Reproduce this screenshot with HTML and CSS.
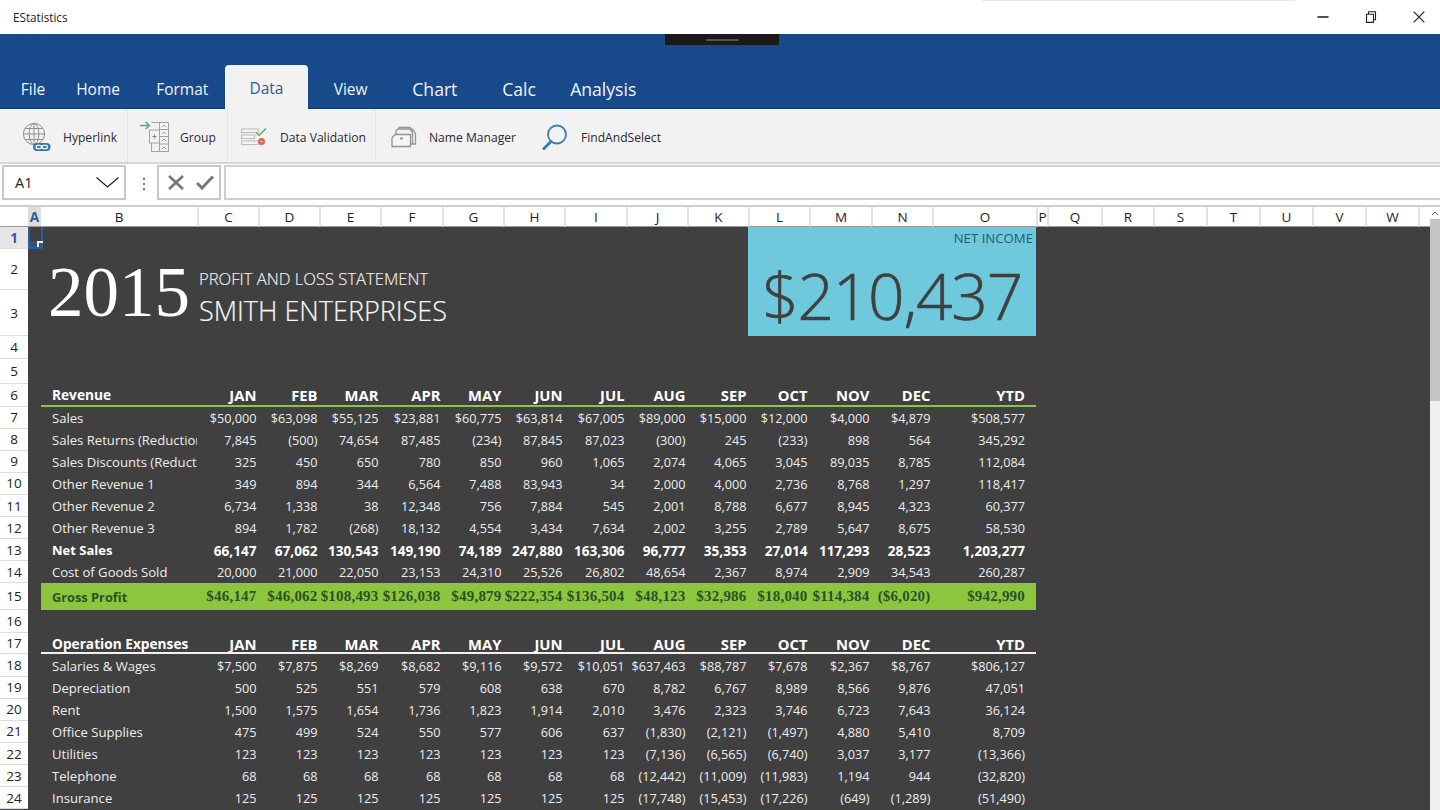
FILE: index.html
```html
<!DOCTYPE html>
<html lang="en">
<head>
<meta charset="utf-8">
<title>EStatistics</title>
<link rel="stylesheet" href="styles.css">
</head>
<body>
<div class="app">
  <header class="titlebar">
    <span class="app-name">EStatistics</span>
    <div class="win">
      <svg width="12" height="12" viewBox="0 0 12 12"><path d="M0.5 6h11" stroke="#222" stroke-width="1.6"/></svg>
      <svg width="12" height="12" viewBox="0 0 12 12" fill="none" stroke="#222" stroke-width="1.1"><path d="M1.5 3.2h7v8.2h-7z"/><path d="M3.5 3V.7h7v8h-2"/></svg>
      <svg width="12" height="12" viewBox="0 0 12 12"><path d="M.7.7l10.6 10.6M11.3.7L.7 11.3" stroke="#222" stroke-width="1.2"/></svg>
    </div>
    <span class="edge"></span>
  </header>
  <nav class="ribbon">
    <span class="notch"><i></i></span>
    <div class="tabs">
      <a class="tab tab-file">File</a>
      <a class="tab">Home</a>
      <a class="tab">Format</a>
      <a class="tab tab-on">Data</a>
      <a class="tab">View</a>
      <a class="tab tab-lg">Chart</a>
      <a class="tab tab-lg">Calc</a>
      <a class="tab tab-lg">Analysis</a>
    </div>
  </nav>
  <div class="toolbar">
    <div class="tool t1">
      <svg width="30" height="30" viewBox="0 0 30 30" fill="none"><g stroke="#8f8f8f" stroke-width="1"><circle cx="12" cy="12" r="10.6"/><ellipse cx="12" cy="12" rx="4.8" ry="10.6"/><path d="M12 1.400v21.200M1.400 12h21.200M3 6.500h18M3 17.500h18"/></g><rect x="11" y="21" width="17.500" height="8" rx="4" fill="#3a76a8"/><g stroke="#fff" stroke-width="1.200" fill="none"><rect x="14" y="23.400" width="5.500" height="3.200" rx="1.600"/><rect x="20" y="23.400" width="5.500" height="3.200" rx="1.600"/></g></svg>
      <span>Hyperlink</span>
    </div>
    <div class="tool t2">
      <svg width="30" height="32" viewBox="0 0 30 32" fill="none"><path d="M0 4.500h8M5.500 1l4 3.500-4 3.500" stroke="#5aa396" stroke-width="1.500"/><g stroke="#a2a2a2"><path d="M11.500 1.500h17v29h-17V22M19.500 1.500v29M19.500 8.500h9M19.500 15.500h9M19.500 23h9"/><rect x="9.500" y="9" width="10" height="13"/><path d="M12.500 15.500h4M14.500 13.500v4" stroke="#808080"/><path d="M22 6l2-2 2 2M22 13l2-2 2 2M22 20l2-2 2 2M22 28l2-2 2 2"/></g></svg>
      <span>Group</span>
    </div>
    <div class="tool t3">
      <svg width="26" height="18" viewBox="0 0 26 18" fill="none"><g stroke="#bdbdbd" stroke-width="1.100" fill="#f6f6f6"><rect x=".6" y="1" width="17" height="3.500"/><rect x=".6" y="7" width="13" height="3.500"/><rect x=".6" y="13" width="17" height="3.500"/></g><path d="M15 4.500l3 3 7-7" stroke="#6aa878" stroke-width="1.500"/><circle cx="20.500" cy="13.500" r="3.500" fill="#e2625a"/><path d="M19 13.500h3" stroke="#fff"/></svg>
      <span>Data Validation</span>
    </div>
    <div class="tool t4">
      <svg width="26" height="22" viewBox="0 0 26 22" fill="none" stroke="#949494" stroke-width="1.300"><path d="M1 20.500V12l3-3.500h15.500V20.500z" fill="#f6f6f6"/><path d="M5 8V5l2-2h12l2.500 3v12h-2"/><path d="M8 3V1.500h11l4 3.500 1.500 3v10h-3"/><path d="M9 12.500h3" stroke-width="1.800"/></svg>
      <span>Name Manager</span>
    </div>
    <div class="tool t5">
      <svg width="26" height="26" viewBox="0 0 26 26" fill="none" stroke="#3b7cb3"><circle cx="15" cy="10.500" r="9" stroke-width="1.800"/><path d="M9 17.500L2 24.500" stroke-width="3" stroke-linecap="round"/></svg>
      <span>FindAndSelect</span>
    </div>
  </div>
  <div class="formula">
    <div class="namebox">
      <span>A1</span>
      <svg width="23" height="11" viewBox="0 0 23 11" fill="none"><path d="M.5.5L11.500 10 22.500.5" stroke="#222" stroke-width="1.300"/></svg>
    </div>
    <svg class="dots" width="4" height="12" viewBox="0 0 4 12"><g fill="#777"><rect x="1" y="0" width="2" height="2"/><rect x="1" y="5" width="2" height="2"/><rect x="1" y="10" width="2" height="2"/></g></svg>
    <div class="actions">
      <svg width="16" height="15" viewBox="0 0 16 15"><path d="M1 1l14 13M15 1L1 14" stroke="#777" stroke-width="2.600"/></svg>
      <svg width="18" height="15" viewBox="0 0 18 15"><path d="M1 8l5 5L17 1.500" fill="none" stroke="#777" stroke-width="3"/></svg>
    </div>
    <div class="input"></div>
  </div>
  <div class="sheet-wrap">
    <div class="sheet">
      <div class="colhead">
        <span></span><span class="on">A</span><span>B</span><span>C</span><span>D</span><span>E</span><span>F</span><span>G</span><span>H</span><span>I</span><span>J</span><span>K</span><span>L</span><span>M</span><span>N</span><span>O</span><span>P</span><span>Q</span><span>R</span><span>S</span><span>T</span><span>U</span><span>V</span><span>W</span><span></span>
      </div>
      <span class="rn rn-on">1</span>
      <span class="sel"><i></i></span>
      <span class="rn">2</span>
      <span class="year">2015</span>
      <span class="sub">PROFIT AND LOSS STATEMENT</span>
      <span class="rn">3</span>
      <span class="co">SMITH ENTERPRISES</span>
      <div class="kpi"><span class="kpi-l">NET INCOME</span><span class="kpi-v">$210,437</span></div>
      <span class="rn">4</span>
      <span class="rn">5</span>
      <div class="row hd"><span class="rn">6</span><span class="lb">Revenue</span><span>JAN</span><span>FEB</span><span>MAR</span><span>APR</span><span>MAY</span><span>JUN</span><span>JUL</span><span>AUG</span><span>SEP</span><span>OCT</span><span>NOV</span><span>DEC</span><span>YTD</span></div>
      <div class="row"><span class="rn">7</span><span class="lb">Sales</span><span>$50,000</span><span>$63,098</span><span>$55,125</span><span>$23,881</span><span>$60,775</span><span>$63,814</span><span>$67,005</span><span>$89,000</span><span>$15,000</span><span>$12,000</span><span>$4,000</span><span>$4,879</span><span>$508,577</span></div>
      <div class="row"><span class="rn">8</span><span class="lb">Sales Returns (Reduction)</span><span>7,845</span><span>(500)</span><span>74,654</span><span>87,485</span><span>(234)</span><span>87,845</span><span>87,023</span><span>(300)</span><span>245</span><span>(233)</span><span>898</span><span>564</span><span>345,292</span></div>
      <div class="row"><span class="rn">9</span><span class="lb">Sales Discounts (Reduction)</span><span>325</span><span>450</span><span>650</span><span>780</span><span>850</span><span>960</span><span>1,065</span><span>2,074</span><span>4,065</span><span>3,045</span><span>89,035</span><span>8,785</span><span>112,084</span></div>
      <div class="row"><span class="rn">10</span><span class="lb">Other Revenue 1</span><span>349</span><span>894</span><span>344</span><span>6,564</span><span>7,488</span><span>83,943</span><span>34</span><span>2,000</span><span>4,000</span><span>2,736</span><span>8,768</span><span>1,297</span><span>118,417</span></div>
      <div class="row"><span class="rn">11</span><span class="lb">Other Revenue 2</span><span>6,734</span><span>1,338</span><span>38</span><span>12,348</span><span>756</span><span>7,884</span><span>545</span><span>2,001</span><span>8,788</span><span>6,677</span><span>8,945</span><span>4,323</span><span>60,377</span></div>
      <div class="row"><span class="rn">12</span><span class="lb">Other Revenue 3</span><span>894</span><span>1,782</span><span>(268)</span><span>18,132</span><span>4,554</span><span>3,434</span><span>7,634</span><span>2,002</span><span>3,255</span><span>2,789</span><span>5,647</span><span>8,675</span><span>58,530</span></div>
      <div class="row net"><span class="rn">13</span><span class="lb">Net Sales</span><span>66,147</span><span>67,062</span><span>130,543</span><span>149,190</span><span>74,189</span><span>247,880</span><span>163,306</span><span>96,777</span><span>35,353</span><span>27,014</span><span>117,293</span><span>28,523</span><span>1,203,277</span></div>
      <div class="row"><span class="rn">14</span><span class="lb">Cost of Goods Sold</span><span>20,000</span><span>21,000</span><span>22,050</span><span>23,153</span><span>24,310</span><span>25,526</span><span>26,802</span><span>48,654</span><span>2,367</span><span>8,974</span><span>2,909</span><span>34,543</span><span>260,287</span></div>
      <div class="row gp"><span class="rn">15</span><span class="lb">Gross Profit</span><span>$46,147</span><span>$46,062</span><span>$108,493</span><span>$126,038</span><span>$49,879</span><span>$222,354</span><span>$136,504</span><span>$48,123</span><span>$32,986</span><span>$18,040</span><span>$114,384</span><span>($6,020)</span><span>$942,990</span></div>
      <span class="rn">16</span>
      <div class="row hd hd-w"><span class="rn">17</span><span class="lb">Operation Expenses</span><span>JAN</span><span>FEB</span><span>MAR</span><span>APR</span><span>MAY</span><span>JUN</span><span>JUL</span><span>AUG</span><span>SEP</span><span>OCT</span><span>NOV</span><span>DEC</span><span>YTD</span></div>
      <div class="row"><span class="rn">18</span><span class="lb">Salaries &amp; Wages</span><span>$7,500</span><span>$7,875</span><span>$8,269</span><span>$8,682</span><span>$9,116</span><span>$9,572</span><span>$10,051</span><span>$637,463</span><span>$88,787</span><span>$7,678</span><span>$2,367</span><span>$8,767</span><span>$806,127</span></div>
      <div class="row"><span class="rn">19</span><span class="lb">Depreciation</span><span>500</span><span>525</span><span>551</span><span>579</span><span>608</span><span>638</span><span>670</span><span>8,782</span><span>6,767</span><span>8,989</span><span>8,566</span><span>9,876</span><span>47,051</span></div>
      <div class="row"><span class="rn">20</span><span class="lb">Rent</span><span>1,500</span><span>1,575</span><span>1,654</span><span>1,736</span><span>1,823</span><span>1,914</span><span>2,010</span><span>3,476</span><span>2,323</span><span>3,746</span><span>6,723</span><span>7,643</span><span>36,124</span></div>
      <div class="row"><span class="rn">21</span><span class="lb">Office Supplies</span><span>475</span><span>499</span><span>524</span><span>550</span><span>577</span><span>606</span><span>637</span><span>(1,830)</span><span>(2,121)</span><span>(1,497)</span><span>4,880</span><span>5,410</span><span>8,709</span></div>
      <div class="row"><span class="rn">22</span><span class="lb">Utilities</span><span>123</span><span>123</span><span>123</span><span>123</span><span>123</span><span>123</span><span>123</span><span>(7,136)</span><span>(6,565)</span><span>(6,740)</span><span>3,037</span><span>3,177</span><span>(13,366)</span></div>
      <div class="row"><span class="rn">23</span><span class="lb">Telephone</span><span>68</span><span>68</span><span>68</span><span>68</span><span>68</span><span>68</span><span>68</span><span>(12,442)</span><span>(11,009)</span><span>(11,983)</span><span>1,194</span><span>944</span><span>(32,820)</span></div>
      <div class="row"><span class="rn">24</span><span class="lb">Insurance</span><span>125</span><span>125</span><span>125</span><span>125</span><span>125</span><span>125</span><span>125</span><span>(17,748)</span><span>(15,453)</span><span>(17,226)</span><span>(649)</span><span>(1,289)</span><span>(51,490)</span></div>
    </div>
    <div class="scroll">
      <svg width="10" height="12" viewBox="0 0 10 12"><path d="M2 8l3-3 3 3" fill="none" stroke="#666"/></svg>
      <div class="thumb"></div>
    </div>
  </div>
</div>
</body>
</html>
```

FILE: styles.css
```css
* { box-sizing: border-box; }
html, body { margin: 0; height: 100%; overflow: hidden; background: #fff; }
body { font-family: "Open Sans", "Noto Sans", sans-serif; color: #222; }
.app { display: flex; flex-direction: column; height: 810px; width: 1440px; }

.titlebar { position: relative; flex: 0 0 34px; display: flex; align-items: center; justify-content: space-between; padding: 0 15px 0 13px; background: #fff; }
.app-name { font-size: 11.7px; color: #222; }
.win { display: flex; align-items: center; gap: 36px; }
.edge { position: absolute; top: 0; left: 982px; width: 313px; height: 1px; background: #e8e8e8; }

.ribbon { position: relative; flex: 0 0 75px; display: flex; align-items: flex-end; background: #18498b; border-bottom: 1px solid #123a70; }
.notch { position: absolute; top: 0; left: 665px; width: 114px; height: 11px; background: #1b1a18; display: flex; justify-content: center; padding-top: 5px; }
.notch i { display: block; width: 33px; height: 2px; background: #55554f; }
.tabs { display: flex; align-items: flex-end; margin-bottom: -1px; }
.tab { width: 84.2px; height: 44px; display: flex; align-items: center; justify-content: center; padding-top: 3px; font-size: 15.5px; color: #f2f5fa; }
.tab-file { width: 66px; margin-right: -10px; }
.tab-on { width: 83.2px; margin: 0 .5px; color: #2b5c9c; background: #f2f2f2; border-radius: 4px 4px 0 0; padding-top: 1px; padding-bottom: 0; }
.tab-lg { font-size: 17.6px; }

.toolbar { flex: 0 0 55px; display: flex; align-items: stretch; background: #f2f2f2; border-bottom: 2px solid #d6d6d6; }
.tool { display: flex; align-items: center; padding-top: 3px; font-size: 12.1px; color: #2a2a2a; border-right: 1px solid #e6e6e6; }
.tool svg { flex: none; }
.t1 { width: 128px; padding-left: 22px; gap: 11px; }
.t2 { width: 100px; padding-left: 12px; gap: 10px; }
.t3 { width: 148px; padding-left: 13px; gap: 13px; }
.t4 { width: 150px; padding-left: 15px; gap: 12px; border-right: 0; }
.t5 { padding-left: 16px; gap: 13px; border-right: 0; }

.formula { flex: 0 0 41px; display: flex; align-items: flex-start; padding: 1px 0 0 2px; background: #fff; }
.namebox { width: 124px; height: 35px; display: flex; align-items: center; justify-content: space-between; padding: 0 5px 1px 11px; border: 2px solid #c8c8c8; font-size: 14.5px; }
.dots { margin: 13px 11px 0 16px; }
.actions { width: 64px; height: 35px; display: flex; align-items: center; gap: 12px; padding-left: 9px; border: 2px solid #c8c8c8; }
.input { flex: 1; height: 35px; margin-left: 3px; border: 2px solid #d0d0d0; border-right: 0; }

.sheet-wrap { flex: 1; min-height: 0; display: flex; overflow: hidden; border-top: 2px solid #cfcfcf; }
.sheet {
  flex: 0 0 1430px;
  display: grid;
  grid-template-columns: 28px 13px 156px 61px 61px 61px 62px 61px 61px 62px 61px 61px 61px 62px 61px 104px 11px 54px 52px 53px 53px 53px 53px 53px 12px;
  grid-template-rows: 20px 22px 41px 46px 23px 25px 22.6px repeat(8, 22.1px) 27px 23.1px 21px repeat(7, 22.15px);
  align-content: start;
  background: #404040;
  font-size: 12.7px;
  color: #eeeeee;
}
.colhead, .row { display: contents; }
.colhead span { grid-row: 1; display: flex; align-items: center; justify-content: center; background: #fff; color: #222; font-size: 13.5px; border-left: 2px solid #e2e2e2; border-bottom: 1px solid #9a9a9a; }
.colhead span:first-child { border-left: 0; }
.colhead .on { background: #dedede; color: #2b5c9c; font-weight: 700; border-left: 0; }
.colhead .on + span { border-left: 0; }

.rn { grid-column: 1; display: flex; align-items: center; justify-content: center; background: #fff; color: #222; font-size: 13.5px; border-bottom: 1px solid #dcdcdc; }
.rn-on { background: #e6e6e6; color: #2b5c9c; font-weight: 700; }

.row span { display: flex; align-items: center; justify-content: flex-end; padding-right: 1.5px; white-space: nowrap; overflow: hidden; }
.row .rn { justify-content: center; padding: 0; color: #222; }
.row .lb { grid-column: 3; justify-content: flex-start; padding: 0 0 0 11px; font-size: 13.1px; }
.row span:last-child { padding-right: 11px; }

.hd span:not(.rn) { font-weight: 700; color: #fff; font-size: 14.8px; border-bottom: 2px solid #8cc63f; padding-top: 1px; }
.hd span.lb { font-size: 13.7px; overflow: visible; }
.net span:not(.rn) { font-weight: 700; color: #fff; font-size: 13.6px; }
.net span.lb { font-size: 13px; }
.hd-w span:not(.rn) { border-bottom-color: #f2f2f2; padding-top: 2px; }

.gp span:not(.rn) { background: #8cc63f; color: #2a5225; font-weight: 700; font-family: "Liberation Serif", serif; font-size: 15px; letter-spacing: .2px; }
.gp span.lb { font-family: "Open Sans", sans-serif; font-size: 12.8px; letter-spacing: 0; }

.sel { grid-column: 2; grid-row: 2; position: relative; margin-right: -2px; border: 2px solid #2a5f9e; border-top: 0; background: linear-gradient(#404040 68%, #2f567f 68%); z-index: 1; }
.sel i { position: absolute; right: -2px; bottom: 0; width: 6px; height: 6px; border-left: 2px solid #e8eef5; border-top: 2px solid #e8eef5; }

.year { grid-column: 3; grid-row: 3 / span 2; align-self: center; padding-left: 7px; font-family: "Liberation Serif", serif; font-size: 71px; line-height: 1; color: #fff; }
.sub { grid-column: 4 / span 8; grid-row: 3; align-self: end; padding: 0 0 0 2px; font-size: 16.6px; font-weight: 300; color: #f4f4f4; white-space: nowrap; -webkit-text-stroke: .15px #f4f4f4; }
.co { grid-column: 4 / span 8; grid-row: 4; align-self: start; padding: 0 0 0 2px; font-size: 27px; line-height: 42px; font-weight: 300; color: #f6f6f6; white-space: nowrap; -webkit-text-stroke: .2px #f6f6f6; }

.kpi { grid-column: 13 / span 4; grid-row: 2 / span 3; display: flex; flex-direction: column; align-items: flex-end; background: #6fc9dd; color: #404040; }
.kpi-l { padding: 2px 3px 0 0; font-size: 13.2px; line-height: 18px; color: #235a6e; }
.kpi-v { margin-top: 10px; padding: 0 14px 0 0; font-size: 64px; line-height: 78px; font-weight: 300; letter-spacing: -1.2px; -webkit-text-stroke: .6px #404040; }

.scroll { flex: 1; background: #f0f0f0; }
.scroll svg { display: block; background: #fff; }
.thumb { height: 182px; background: #c4c4c4; }
```
